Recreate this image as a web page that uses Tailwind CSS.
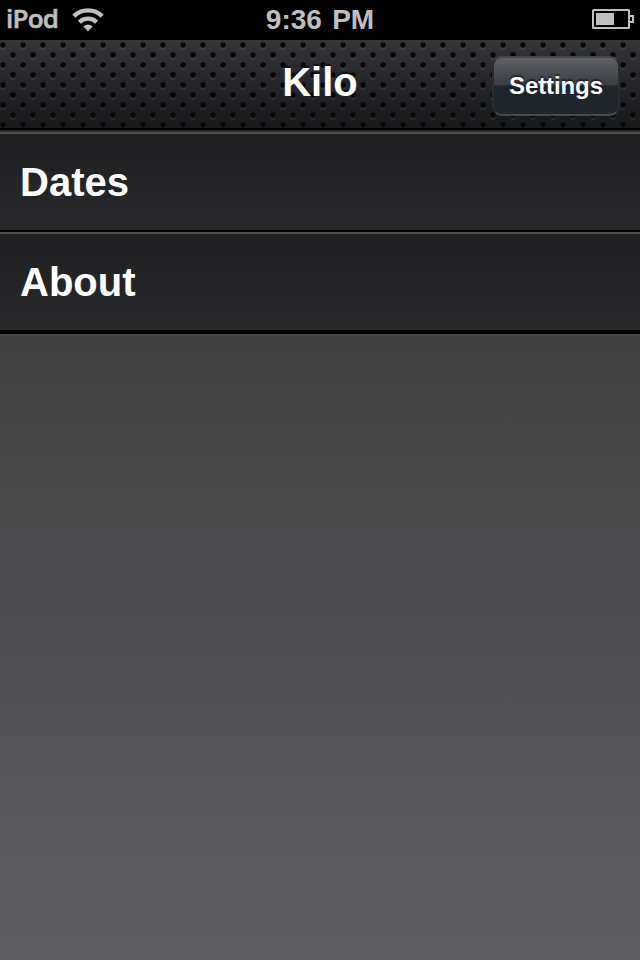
<!DOCTYPE html>
<html lang="en">
<head>
<meta charset="utf-8">
<title>Kilo</title>
<script src="https://cdn.jsdelivr.net/npm/@tailwindcss/browser@4"></script>
</head>
<body class="w-[640px] h-[960px] overflow-hidden flex flex-col bg-black text-white font-['Liberation_Sans',sans-serif] font-bold">
  <div class="h-10 shrink-0 bg-black grid grid-cols-3 items-center text-[#bfbfbf]">
    <div class="flex items-center pl-[6px] gap-[13px]">
      <span class="w-[53px] whitespace-nowrap font-['Open_Sans',sans-serif] font-semibold text-[26px] leading-10 tracking-[-0.8px] h-10 -mt-[5px] [-webkit-text-stroke:0.6px_#bfbfbf]">iPod</span>
      <svg class="w-8 h-6 shrink-0" viewBox="0 0 32 24" fill="none" stroke="#bfbfbf" stroke-width="4.4">
        <path d="M1.8 8.2a20.3 20.3 0 0 1 28.4 0"/>
        <path d="M7.4 14.2a12.2 12.2 0 0 1 17.2 0"/>
        <path d="M16 23.4l-4.6-5a6.6 6.6 0 0 1 9.2 0z" fill="#bfbfbf" stroke="none"/>
      </svg>
    </div>
    <div class="text-center whitespace-nowrap text-[28px] leading-10 [word-spacing:2.5px]">9:36 PM</div>
    <div class="flex justify-end pr-[6px]">
      <svg class="w-[42px] h-5 -mt-0.5" viewBox="0 0 42 20" fill="none" stroke="#bfbfbf" stroke-width="2">
        <rect x="1" y="1" width="36" height="18" rx=".6"/>
        <path d="M38 7h3v6h-3"/>
        <rect x="4" y="4" width="18" height="12" fill="#bfbfbf" stroke="none"/>
      </svg>
    </div>
  </div>

  <header class="relative h-[90px] shrink-0 border-b-2 border-black bg-linear-to-b from-[#343539] to-[#17181a] grid grid-cols-[1fr_auto_1fr] items-center">
    <svg class="absolute inset-0 w-full h-full" aria-hidden="true">
      <defs>
        <pattern id="holes" width="20" height="20" patternUnits="userSpaceOnUse">
          <g fill="#fff" fill-opacity=".07"><circle cx="3" cy="7" r="2.9"/><circle cx="13" cy="17" r="2.9"/></g>
          <g fill="#000" fill-opacity=".35"><circle cx="3" cy="5" r="3.2"/><circle cx="13" cy="15" r="3.2"/></g>
          <g fill="#060607"><circle cx="3" cy="5" r="2.5"/><circle cx="13" cy="15" r="2.5"/></g>
        </pattern>
      </defs>
      <rect width="640" height="88" fill="url(#holes)"/>
    </svg>
    <span></span>
    <h1 class="relative text-[40px] leading-[46px] -mt-1 [text-shadow:0_-2px_1px_rgba(0,0,0,0.6)]">Kilo</h1>
    <button class="relative justify-self-end mr-5 mt-1 w-32 h-[60px] rounded-[10px] border-2 border-t-[#46474b] border-x-[#292c31] border-b-[#4a4b4e] bg-[linear-gradient(#5e6165_0%,#393c41_48%,#1f242a_50%,#20242b_100%)] text-[24px] tracking-[-0.1px] leading-[56px] text-center [text-shadow:0_-2px_1px_rgba(0,0,0,0.5)]">Settings</button>
  </header>

  <ul class="shrink-0 border-t-2 border-[#2b2b2c]">
    <li class="h-[100px] border-t-2 border-t-[#4c4d4e] border-b-2 border-b-black bg-linear-to-b from-[#1e1f21] to-[#29292b] pl-5 text-[40px] leading-[96px]">Dates</li>
    <li class="h-[102px] border-t-2 border-t-[#4c4d4e] border-b-4 border-b-black bg-linear-to-b from-[#1e1f21] to-[#29292b] pl-5 text-[40px] leading-[96px]">About</li>
  </ul>
  <main class="flex-1 bg-[linear-gradient(#404041,#49494a_25%,#4f4e53_48%,#5a595e_85%,#5d5e63)]"></main>
</body>
</html>
